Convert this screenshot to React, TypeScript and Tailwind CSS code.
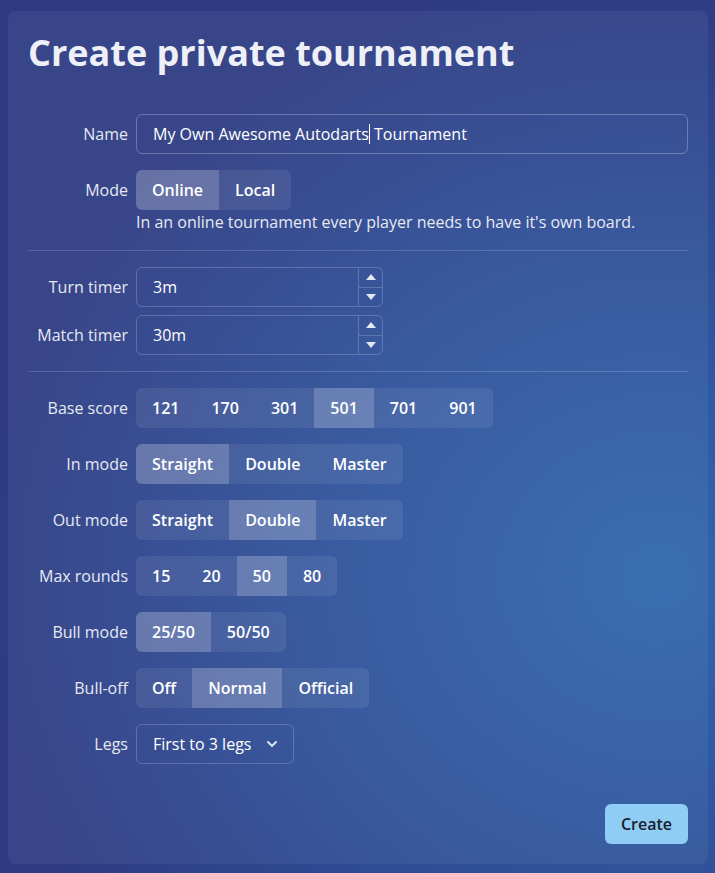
import React from 'react';

type Opt = { label: string; active?: boolean };

function Group({ options }: { options: Opt[] }) {
  return (
    <div className="flex">
      {options.map((o, i) => (
        <button
          key={o.label}
          className={`h-10 px-4 text-base font-semibold text-white ${
            o.active ? 'bg-white/[0.24]' : 'bg-white/[0.08]'
          } ${i === 0 ? 'rounded-l-md' : ''} ${i === options.length - 1 ? 'rounded-r-md' : ''}`}
        >
          {o.label}
        </button>
      ))}
    </div>
  );
}

function Row({ label, children }: { label: string; children: React.ReactNode }) {
  return (
    <div className="flex items-start gap-2">
      <label className="w-[100px] shrink-0 h-10 flex items-center justify-end text-base text-[#e6e9f2]">
        {label}
      </label>
      <div className="flex-1 min-w-0">{children}</div>
    </div>
  );
}

function NumberInput({ value }: { value: string }) {
  return (
    <div className="flex h-10 w-[247px] rounded-md border border-white/[0.2]">
      <div className="flex-1 flex items-center px-4 text-base text-white">{value}</div>
      <div className="w-6 flex flex-col border-l border-white/[0.2]">
        <div className="flex-1 flex items-center justify-center border-b border-white/[0.2]">
          <svg width="10" height="6" viewBox="0 0 10 6"><path d="M5 0L10 6H0Z" fill="#e2e8f0" /></svg>
        </div>
        <div className="flex-1 flex items-center justify-center">
          <svg width="10" height="6" viewBox="0 0 10 6"><path d="M0 0H10L5 6Z" fill="#e2e8f0" /></svg>
        </div>
      </div>
    </div>
  );
}

export default function App() {
  return (
    <div
      className="min-h-screen pl-2 pr-[7px] pt-[11px] pb-[9px] bg-[radial-gradient(ellipse_95%_70%_at_92%_66%,#3067ae_0%,#2f4f98_55%,#2e3b82_100%)]"
      style={{ fontFamily: '"Open Sans", "Noto Sans", sans-serif' }}
    >
      <div className="rounded-lg bg-white/[0.05] p-5">
        <h1 className="text-[36px] leading-[43px] font-bold text-[#eef0f8] mb-10">Create private tournament</h1>

        <div className="flex flex-col gap-4">
          <Row label="Name">
            <div className="h-10 flex items-center rounded-md border border-white/[0.26] px-4 text-base text-white">
              <span className="whitespace-pre">
                My Own Awesome Autodarts
                <span className="inline-block w-px h-5 align-[-4px] bg-white" /> Tournament
              </span>
            </div>
          </Row>
          <Row label="Mode">
            <Group options={[{ label: 'Online', active: true }, { label: 'Local' }]} />
            <p className="text-base leading-6 text-[#e6e9f2]">
              In an online tournament every player needs to have it's own board.
            </p>
          </Row>
        </div>

        <div className="h-px bg-white/[0.16] my-4" />

        <div className="flex flex-col gap-2">
          <Row label="Turn timer">
            <NumberInput value="3m" />
          </Row>
          <Row label="Match timer">
            <NumberInput value="30m" />
          </Row>
        </div>

        <div className="h-px bg-white/[0.16] my-4" />

        <div className="flex flex-col gap-4">
          <Row label="Base score">
            <Group
              options={[
                { label: '121' },
                { label: '170' },
                { label: '301' },
                { label: '501', active: true },
                { label: '701' },
                { label: '901' },
              ]}
            />
          </Row>
          <Row label="In mode">
            <Group options={[{ label: 'Straight', active: true }, { label: 'Double' }, { label: 'Master' }]} />
          </Row>
          <Row label="Out mode">
            <Group options={[{ label: 'Straight' }, { label: 'Double', active: true }, { label: 'Master' }]} />
          </Row>
          <Row label="Max rounds">
            <Group options={[{ label: '15' }, { label: '20' }, { label: '50', active: true }, { label: '80' }]} />
          </Row>
          <Row label="Bull mode">
            <Group options={[{ label: '25/50', active: true }, { label: '50/50' }]} />
          </Row>
          <Row label="Bull-off">
            <Group options={[{ label: 'Off' }, { label: 'Normal', active: true }, { label: 'Official' }]} />
          </Row>
          <Row label="Legs">
            <div className="h-10 w-[158px] flex items-center justify-between rounded-md border border-white/[0.2] pl-4 pr-4 text-base text-white">
              <span>First to 3 legs</span>
              <svg width="10" height="6" viewBox="0 0 10 6" fill="none">
                <path d="M1 1L5 5L9 1" stroke="#e2e8f0" strokeWidth="1.8" strokeLinecap="round" strokeLinejoin="round" />
              </svg>
            </div>
          </Row>
        </div>

        <div className="flex justify-end mt-10">
          <button className="h-10 px-4 rounded-md bg-[#90cdf4] text-base font-semibold text-[#1a202c]">Create</button>
        </div>
      </div>
    </div>
  );
}
